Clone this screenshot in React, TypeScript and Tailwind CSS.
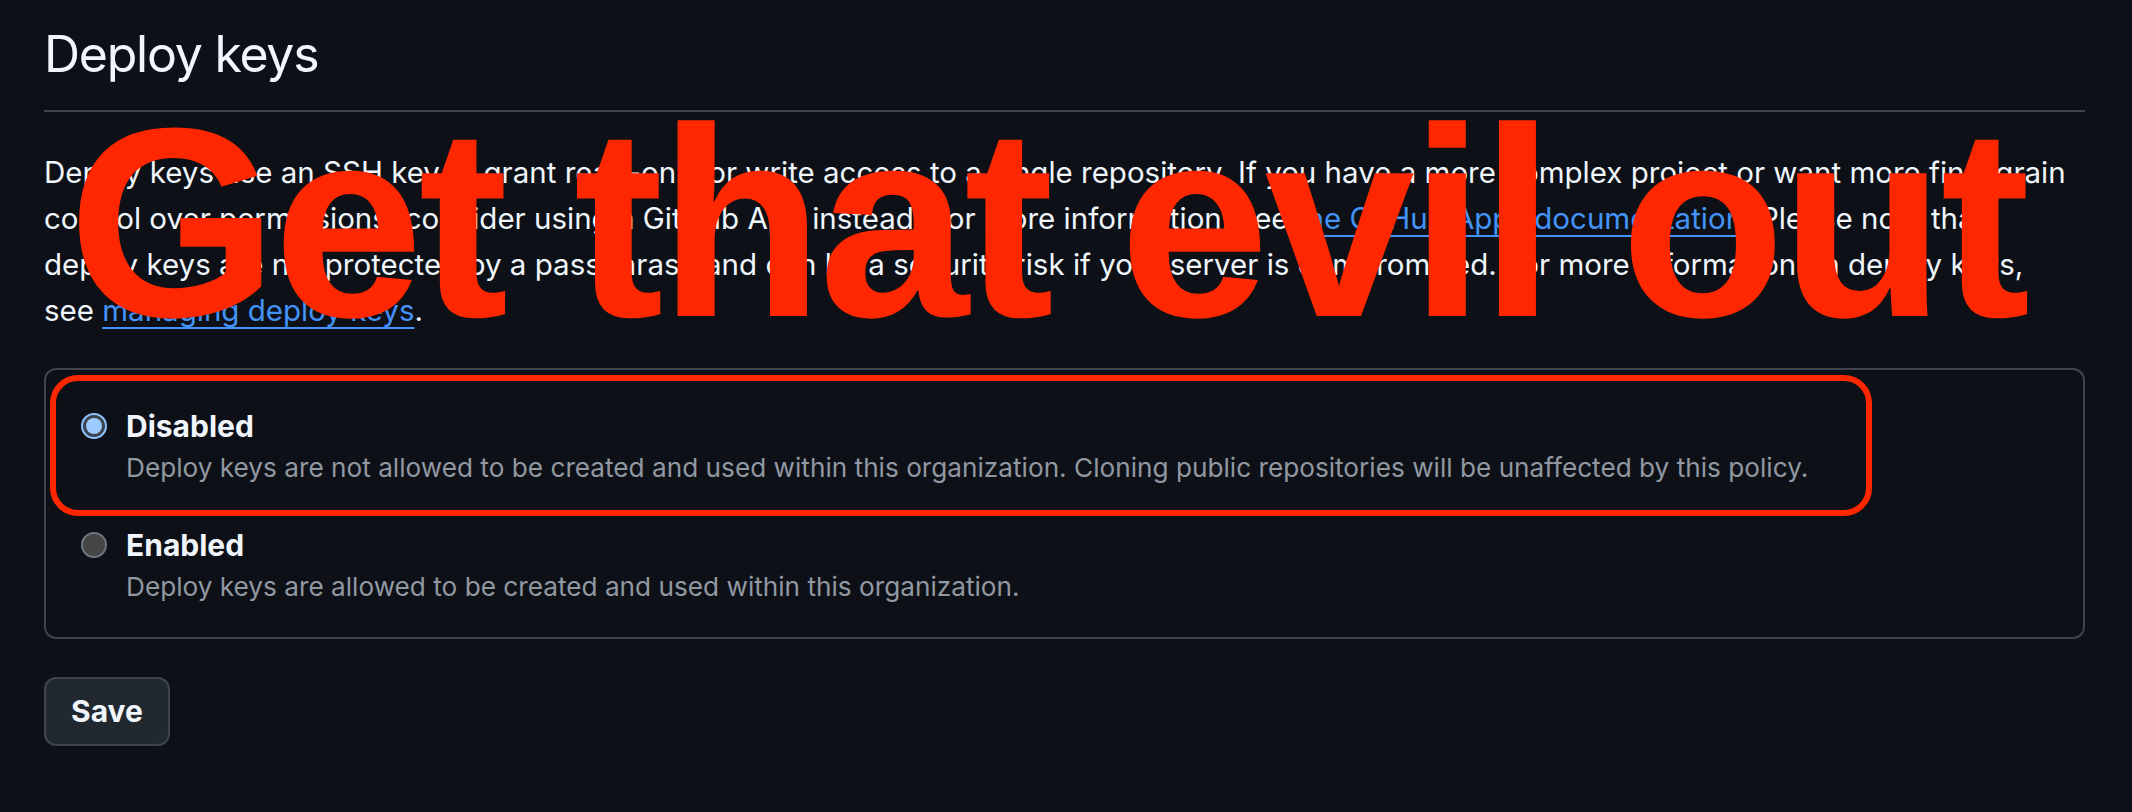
const options = [
	{
		id: 'disabled',
		label: 'Disabled',
		note: 'Deploy keys are not allowed to be created and used within this organization. Cloning public repositories will be unaffected by this policy.',
		checked: true,
	},
	{
		id: 'enabled',
		label: 'Enabled',
		note: 'Deploy keys are allowed to be created and used within this organization.',
		checked: false,
	},
];

function Radio({ checked }: { checked: boolean }) {
	if (checked) {
		return (
			<span className="flex h-[26px] w-[26px] items-center justify-center rounded-full border-2 border-[#8cc4ff] bg-[#3d444d]">
				<span className="h-[16px] w-[16px] rounded-full bg-[#9ecbff]" />
			</span>
		);
	}
	return <span className="h-[26px] w-[26px] rounded-full border-2 border-[#6e7681] bg-[#454545]" />;
}

export default function App() {
	return (
		<div className="relative min-h-[812px] w-full overflow-hidden bg-[#0d1117] font-['Inter',sans-serif] text-[#f0f6fc]">
			<div className="pl-[44px] pr-[47px] pt-[22px]">
				<h2 className="border-b-2 border-[#3d444d] pb-[24px] text-[50px] font-normal leading-[64px] tracking-[-0.025em]">
					Deploy keys
				</h2>

				<p className="mr-[11px] mt-[37px] text-[29.5px] leading-[46px]">
					Deploy keys use an SSH key to grant read-only or write access to a single repository. If you have a more complex
					project or want more fine-grain control over permissions, consider using a GitHub App instead. For more
					information, see{' '}
					<a className="text-[#4493f8] underline decoration-2 underline-offset-[6px]">the GitHub Apps documentation</a>.
					Please note that deploy keys are not protected by a passphrase and can be a security risk if your server is
					compromised. For more information on deploy keys, see{' '}
					<a className="text-[#4493f8] underline decoration-2 underline-offset-[6px]">managing deploy keys</a>.
				</p>

				<div className="mt-[35px] rounded-[12px] border-2 border-[#3d444d] pb-[32px] pl-[35px] pr-6 pt-[38px]">
					<div className="flex flex-col gap-[41px]">
						{options.map((opt) => (
							<div key={opt.id} className="flex gap-[19px]">
								<div className="flex h-[36px] items-center">
									<Radio checked={opt.checked} />
								</div>
								<div>
									<div className="text-[30px] font-bold leading-[36px]">{opt.label}</div>
									<div className="mt-[6px] text-[26.2px] leading-[36px] text-[#9198a1]">{opt.note}</div>
								</div>
							</div>
						))}
					</div>
				</div>

				<button className="mt-[38px] h-[69px] w-[126px] rounded-[12px] border-2 border-[#3d444d] bg-[#212830] text-[30px] font-bold text-[#f0f6fc]">
					Save
				</button>
			</div>

			{/* red markup drawn over the screenshot */}
			<div className="pointer-events-none absolute left-[50px] top-[375px] h-[141px] w-[1822px] rounded-[28px] border-[6px] border-[#fe2700]" />
			<div className="pointer-events-none absolute left-[68px] top-[88px] whitespace-nowrap font-['Liberation_Sans',Arial,sans-serif] text-[270px] font-bold leading-none tracking-[-0.018em] text-[#fe2700]">
				Get that evil out
			</div>
		</div>
	);
}
